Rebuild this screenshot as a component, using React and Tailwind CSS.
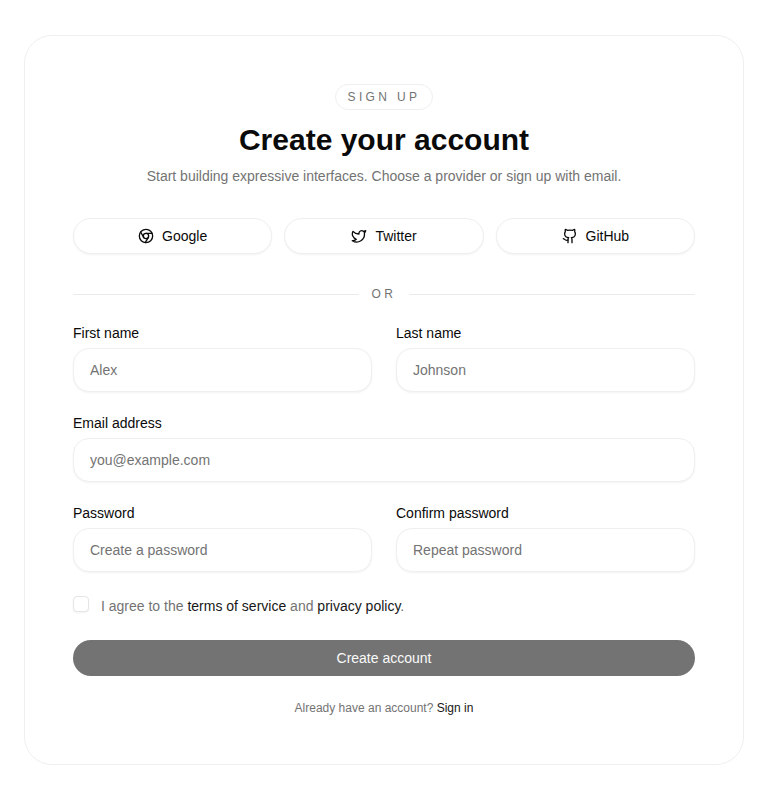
import { Chrome, Twitter, Github } from "lucide-react";

const providers = [
  { name: "Google", Icon: Chrome },
  { name: "Twitter", Icon: Twitter },
  { name: "GitHub", Icon: Github },
];

function Field({ id, label, type = "text", placeholder }) {
  return (
    <div className="flex flex-col gap-2">
      <label htmlFor={id} className="text-sm leading-[14px] font-medium">
        {label}
      </label>
      <input
        id={id}
        type={type}
        placeholder={placeholder}
        className="h-11 w-full rounded-2xl border border-[#efefef] bg-white px-4 text-sm shadow-xs outline-none placeholder:text-[#737373]"
      />
    </div>
  );
}

export default function App() {
  return (
    <main className="flex min-h-screen items-center justify-center bg-white px-6 py-8 font-['Liberation_Sans',Arial,sans-serif] text-[#0a0a0a]">
      <section className="w-full max-w-3xl rounded-[28px] border border-[#efefef] bg-white p-12">
        <header className="flex flex-col items-center text-center">
          <span className="rounded-full border border-[#efefef] px-3 py-1 text-xs tracking-[0.28em] text-[#737373] uppercase">
            Sign up
          </span>
          <h1 className="mt-3 text-3xl leading-9 font-semibold">Create your account</h1>
          <p className="mt-2 text-sm text-[#737373]">
            Start building expressive interfaces. Choose a provider or sign up with email.
          </p>
        </header>

        <div className="mt-8 grid grid-cols-3 gap-3">
          {providers.map(({ name, Icon }) => (
            <button
              key={name}
              type="button"
              className="flex h-9 items-center justify-center gap-2 rounded-full border border-[#efefef] bg-white text-sm font-medium shadow-xs"
            >
              <Icon className="size-4" aria-hidden="true" />
              {name}
            </button>
          ))}
        </div>

        <div className="mt-8 flex items-center gap-3 text-xs tracking-[0.3em] text-[#737373] uppercase">
          <span className="h-px flex-1 bg-[#ebebeb]" />
          Or
          <span className="h-px flex-1 bg-[#ebebeb]" />
        </div>

        <form className="mt-6 flex flex-col gap-6">
          <div className="grid grid-cols-2 gap-6">
            <Field id="first" label="First name" placeholder="Alex" />
            <Field id="last" label="Last name" placeholder="Johnson" />
          </div>
          <Field id="email" label="Email address" type="email" placeholder="you@example.com" />
          <div className="grid grid-cols-2 gap-6">
            <Field id="password" label="Password" type="password" placeholder="Create a password" />
            <Field id="confirm" label="Confirm password" type="password" placeholder="Repeat password" />
          </div>
          <div className="flex items-start gap-3">
            <input
              id="terms"
              type="checkbox"
              className="size-4 appearance-none rounded-sm border border-[#e5e5e5] bg-white shadow-xs checked:bg-[#171717]"
            />
            <label htmlFor="terms" className="text-sm text-[#737373]">
              I agree to the <a href="#terms" className="text-[#171717]">terms of service</a> and{" "}
              <a href="#privacy" className="text-[#171717]">privacy policy</a>.
            </label>
          </div>
          <button
            type="submit"
            className="h-9 w-full rounded-full bg-[#737373] text-sm font-medium text-[#fafafa]"
          >
            Create account
          </button>
        </form>

        <p className="mt-6 text-center text-xs text-[#737373]">
          Already have an account? <a href="#signin" className="text-[#171717]">Sign in</a>
        </p>
      </section>
    </main>
  );
}
